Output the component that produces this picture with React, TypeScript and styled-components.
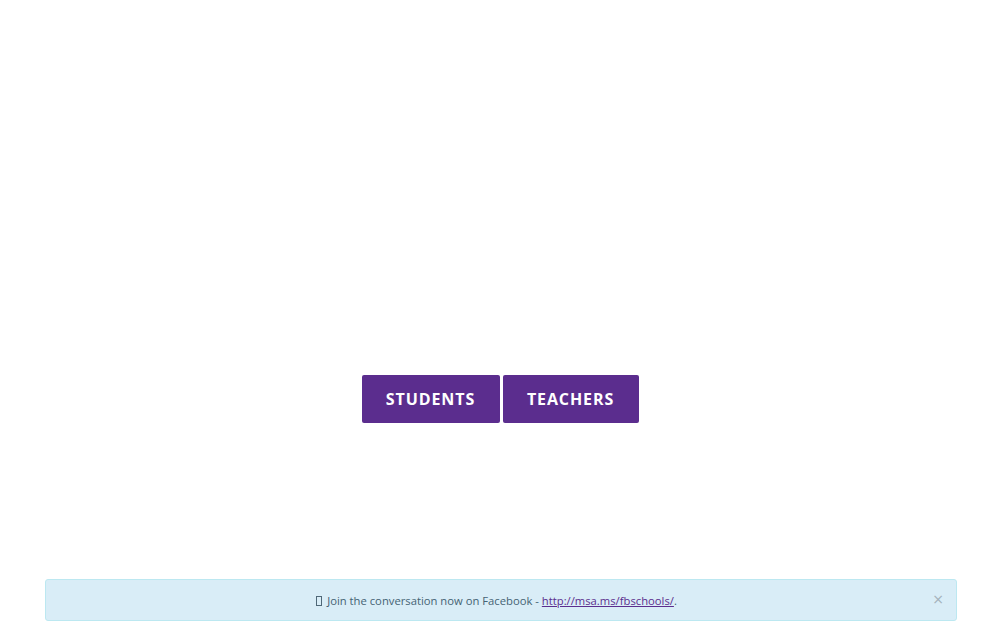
import React from "react";
import styled, { createGlobalStyle } from "styled-components";

const Global = createGlobalStyle`
  html, body { margin: 0; padding: 0; background: #fff; }
  body { font-family: "Open Sans", "Liberation Sans", sans-serif; }
`;

const Page = styled.div`
  height: 630px;
  display: flex;
  flex-direction: column;
  box-sizing: border-box;
  padding: 375px 45px 9px;
`;

const ButtonRow = styled.div`
  display: flex;
  justify-content: center;
  gap: 3px;
  padding-right: 2px;
`;

const RoleButton = styled.a<{ $w: number }>`
  display: flex;
  align-items: center;
  justify-content: center;
  height: 48px;
  width: ${(p) => p.$w}px;
  box-sizing: border-box;
  background: #5b2d8e;
  color: #fff;
  border-radius: 2px;
  font-family: "Open Sans", sans-serif;
  font-weight: 700;
  font-size: 16px;
  letter-spacing: 0.9px;
  text-decoration: none;
`;

const Spacer = styled.div`
  flex: 1;
`;

const Alert = styled.div`
  position: relative;
  height: 42px;
  box-sizing: border-box;
  padding-right: 9px;
  background: #d9edf7;
  border: 1px solid #bce8f1;
  border-radius: 3px;
  color: #456374;
  font-size: 11.25px;
  display: flex;
  align-items: center;
  justify-content: center;
`;

const Tofu = styled.span`
  display: inline-block;
  width: 4px;
  height: 8px;
  border: 1px solid #4f6878;
  margin-right: 5px;
  vertical-align: -1px;
`;

const Link = styled.a`
  color: #5b2d8e;
  text-decoration: underline;
`;

const Close = styled.span`
  position: absolute;
  right: 12px;
  top: 50%;
  transform: translateY(-55%);
  color: #a3b2bb;
  font-size: 14px;
  font-family: "DejaVu Sans", sans-serif;
  line-height: 1;
`;

export default function App() {
  return (
    <>
      <Global />
      <Page>
        <ButtonRow>
          <RoleButton $w={138} href="#">STUDENTS</RoleButton>
          <RoleButton $w={136} href="#">TEACHERS</RoleButton>
        </ButtonRow>
        <Spacer />
        <Alert>
          <span>
            <Tofu />
            Join the conversation now on Facebook - <Link href="#">http://msa.ms/fbschools/</Link>.
          </span>
          <Close>×</Close>
        </Alert>
      </Page>
    </>
  );
}
